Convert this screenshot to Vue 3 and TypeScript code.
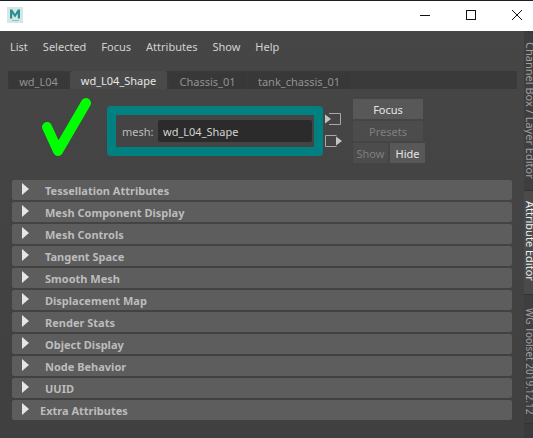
<template>
  <div class="window">
    <div class="titlebar">
      <svg class="logo" width="16" height="16" viewBox="0 0 16 16">
        <rect width="16" height="16" fill="#d5e8e7" />
        <path d="M3 11.5V2.5H5.2L8 7L10.8 2.5H13V11.5H10.8V6.5L8 10.5L5.2 6.5V11.5Z" fill="#2a8f92" />
        <rect x="5" y="13" width="7" height="1" fill="#8fbfc0" />
      </svg>
      <div class="win-buttons">
        <svg width="12" height="12" viewBox="0 0 12 12"><path d="M1 6.5H11" stroke="#111" fill="none" /></svg>
        <svg width="12" height="12" viewBox="0 0 12 12"><rect x="1.5" y="1.5" width="9" height="9" stroke="#111" fill="none" /></svg>
        <svg width="12" height="12" viewBox="0 0 12 12"><path d="M1 1L11 11M11 1L1 11" stroke="#111" fill="none" /></svg>
      </div>
    </div>

    <div class="body">
      <div class="editor">
        <div class="menu">
          <span v-for="m in menus" :key="m">{{ m }}</span>
        </div>

        <div class="tabs">
          <div v-for="tab in tabs" :key="tab.name" class="tab" :class="{ active: tab.active }" :style="{ width: tab.width + 'px' }">
            {{ tab.name }}
          </div>
        </div>

        <div class="node-row">
          <svg class="check" width="54" height="62" viewBox="0 0 54 62">
            <path d="M6 31L17 55L45 7" stroke="#00ff00" stroke-width="10" stroke-linecap="round" stroke-linejoin="round" fill="none" />
          </svg>
          <div class="highlight">
            <span class="mesh-label">mesh:</span>
            <div class="mesh-input">wd_L04_Shape</div>
          </div>
          <div class="arrows">
            <svg width="17" height="14" viewBox="0 0 17 14">
              <path d="M4 1.5H15.5V12.5H4" stroke="#a8a8a8" fill="none" />
              <path d="M0 2.5L6 7L0 11.5Z" fill="#c4c4c4" />
            </svg>
            <svg width="17" height="14" viewBox="0 0 17 14">
              <path d="M11.5 1.5H0.5V12.5H11.5" stroke="#a8a8a8" fill="none" />
              <path d="M11 2.5L17 7L11 11.5Z" fill="#c4c4c4" />
            </svg>
          </div>
          <div class="actions">
            <button class="btn wide">Focus</button>
            <button class="btn wide off">Presets</button>
            <div class="show-hide">
              <button class="btn small off">Show</button>
              <button class="btn small">Hide</button>
            </div>
          </div>
        </div>

        <div class="sections">
          <div v-for="s in sections" :key="s" class="section" :class="{ extra: s === 'Extra Attributes' }">
            <svg class="arrow" width="7" height="12" viewBox="0 0 7 12"><path d="M0 0L7 6L0 12Z" fill="#e6e6e6" /></svg>
            <span>{{ s }}</span>
          </div>
        </div>
      </div>

      <div class="rail">
        <div class="rail-tab channel">Channel Box / Layer Editor</div>
        <div class="rail-tab current">Attribute Editor</div>
        <div class="rail-tab toolset">WG Toolset 2019.12.12</div>
      </div>
    </div>
  </div>
</template>

<script setup lang="ts">
const menus = ['List', 'Selected', 'Focus', 'Attributes', 'Show', 'Help']

const tabs = [
  { name: 'wd_L04', width: 59, active: false },
  { name: 'wd_L04_Shape', width: 97, active: true },
  { name: 'Chassis_01', width: 77, active: false },
  { name: 'tank_chassis_01', width: 102, active: false }
]

const sections = [
  'Tessellation Attributes',
  'Mesh Component Display',
  'Mesh Controls',
  'Tangent Space',
  'Smooth Mesh',
  'Displacement Map',
  'Render Stats',
  'Object Display',
  'Node Behavior',
  'UUID',
  'Extra Attributes'
]
</script>

<style>
html, body { margin: 0; background: #444; }
</style>

<style scoped>
.window { width: 533px; height: 438px; display: flex; flex-direction: column; overflow: hidden; font-family: "Noto Sans", "Open Sans", sans-serif; font-size: 11px; color: #c8c8c8; }
.titlebar { height: 31px; flex-shrink: 0; box-sizing: border-box; background: #fff; border-top: 1px solid #1a2027; display: flex; align-items: center; justify-content: space-between; padding: 0 0 2px 7px; }
.win-buttons { display: flex; gap: 34px; padding-right: 10px; }
.body { flex: 1; display: flex; background: linear-gradient(#464646, #404040); }
.editor { width: 524px; flex-shrink: 0; }
.menu { display: flex; gap: 15px; padding: 5px 10px 0; height: 26px; box-sizing: border-box; align-items: center; color: #d2d2d2; }
.tabs { display: flex; gap: 2px; margin: 14px 7px 0 8px; background: #3a3a3a; height: 18px; padding-left: 1px; align-items: flex-end; }
.tab { height: 16px; line-height: 17px; text-align: center; background: #383838; color: #929292; border-radius: 3px 3px 0 0; box-sizing: border-box; }
.tab.active { background: #4a4a4a; color: #e6e6e6; height: 18px; line-height: 19px; }
.node-row { display: flex; height: 91px; padding-top: 10px; box-sizing: border-box; }
.check { margin: -3px 0 0 41px; }
.highlight { margin: 7px 0 0 12px; width: 216px; height: 50px; box-sizing: border-box; border: 9px solid #008080; border-radius: 4px; background: #444; display: flex; align-items: center; padding: 0 2px 0 6px; gap: 6px; }
.mesh-label { color: #bdbdbd; width: 30px; flex-shrink: 0; padding-top: 1px; }
.mesh-input { width: 154px; height: 22px; line-height: 24px; background: #2b2b2b; border-radius: 2px; color: #d4d4d4; padding-left: 5px; box-sizing: border-box; }
.arrows { display: flex; flex-direction: column; gap: 8px; margin: 13px 0 0 2px; width: 17px; }
.actions { margin-left: 11px; display: flex; flex-direction: column; gap: 2px; }
.btn { display: block; height: 20px; padding: 0; border: none; background: #585858; color: #e6e6e6; font: inherit; }
.btn.wide { width: 70px; }
.btn.small { width: 35px; }
.btn.off { background: #4c4c4c; color: #7f7f7f; }
.show-hide { display: flex; gap: 2px; }
.sections { display: flex; flex-direction: column; gap: 2px; margin: 0 12px; }
.section { position: relative; height: 20px; background: #5d5d5d; border-radius: 2px; display: flex; align-items: center; padding-left: 33px; font-weight: 700; color: #bcbcbc; box-sizing: border-box; }
.section.extra { padding-left: 28px; }
.arrow { position: absolute; left: 10px; top: 3px; }
.rail { width: 9px; flex-shrink: 0; display: flex; flex-direction: column; background: #3a3a3a; padding-top: 2px; box-sizing: border-box; }
.rail-tab { writing-mode: vertical-rl; white-space: nowrap; overflow: hidden; box-sizing: border-box; color: #a0a0a0; line-height: 6px; }
.channel { height: 157px; padding-top: 9px; background: #3e3e3e; }
.current { height: 104px; padding-top: 10px; background: #4a4a4a; color: #f0f0f0; border-top: 1px solid #333; }
.toolset { height: 130px; padding-top: 13px; font-size: 10px; background: #3e3e3e; border-top: 1px solid #333; border-bottom: 1px solid #333; }
</style>
